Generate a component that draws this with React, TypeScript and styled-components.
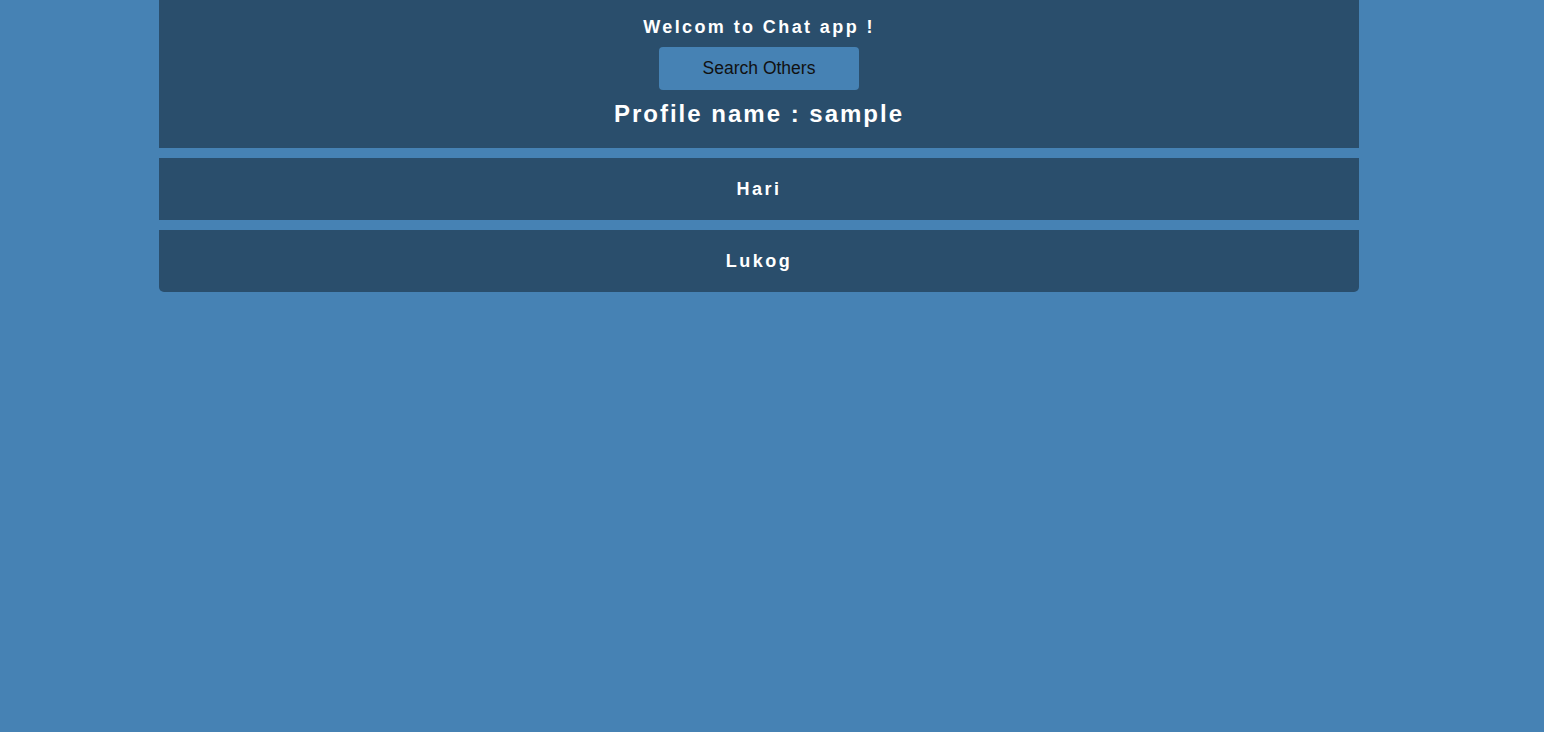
import React from "react";
import styled, { createGlobalStyle } from "styled-components";

const Global = createGlobalStyle`
  html, body { margin: 0; padding: 0; background: #4682b4; }
  body { font-family: "Liberation Sans", Arial, sans-serif; }
`;

const Page = styled.div`
  min-height: 732px;
  background: #4682b4;
`;

const Column = styled.div`
  width: 1200px;
  margin-left: 159px;
  display: flex;
  flex-direction: column;
  gap: 10px;
  border-radius: 0 0 5px 5px;
  overflow: hidden;
`;

const Header = styled.header`
  background: #2a4e6c;
  height: 148px;
  box-sizing: border-box;
  padding-top: 15px;
  display: flex;
  flex-direction: column;
  align-items: center;
`;

const Welcome = styled.h3`
  margin: 0;
  color: #fff;
  font-size: 18px;
  font-weight: bold;
  letter-spacing: 2.4px;
  line-height: 24px;
`;

const SearchButton = styled.button`
  margin-top: 8px;
  width: 200px;
  height: 43px;
  border: none;
  border-radius: 4px;
  background: #4682b4;
  color: #111;
  font-family: "Liberation Sans", Arial, sans-serif;
  font-size: 17.5px;
  cursor: pointer;
`;

const Profile = styled.h2`
  margin: 9px 0 0;
  color: #fff;
  font-size: 24px;
  font-weight: bold;
  letter-spacing: 2px;
  line-height: 30px;
`;

const UserRow = styled.div`
  background: #2a4e6c;
  height: 62px;
  display: flex;
  align-items: center;
  justify-content: center;
  color: #fff;
  font-size: 18px;
  font-weight: bold;
  letter-spacing: 2.5px;
`;

const users = ["Hari", "Lukog"];

export default function App() {
  return (
    <Page>
      <Global />
      <Column>
        <Header>
          <Welcome>Welcom to Chat app !</Welcome>
          <SearchButton>Search Others</SearchButton>
          <Profile>Profile name : sample</Profile>
        </Header>
        {users.map((u) => (
          <UserRow key={u}>{u}</UserRow>
        ))}
      </Column>
    </Page>
  );
}
